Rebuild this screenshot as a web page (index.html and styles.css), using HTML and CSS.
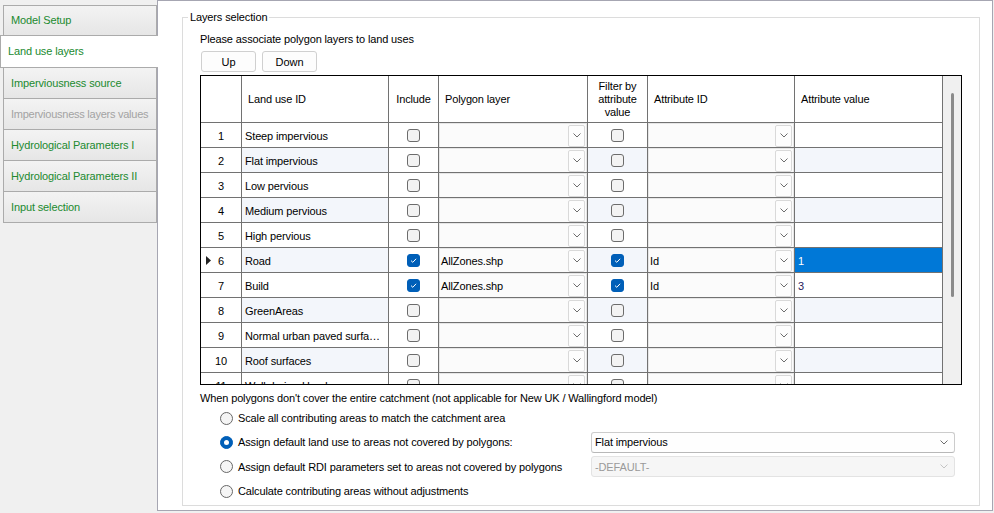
FILE: index.html
```html
<!DOCTYPE html>
<html lang="en">
<head>
    <meta charset="UTF-8">
    <meta name="viewport" content="width=device-width, initial-scale=1.0">
    <title>Land use layers</title>
    <link rel="stylesheet" href="styles.css">
</head>
<body>

    <div class="window">
        <div class="tabs">
            <div class="tab">Model Setup</div>
            <div class="tab active">Land use layers</div>
            <div class="tab">Imperviousness source</div>
            <div class="tab disabled">Imperviousness layers values</div>
            <div class="tab">Hydrological Parameters I</div>
            <div class="tab">Hydrological Parameters II</div>
            <div class="tab">Input selection</div>
        </div>

        <div class="panel">
            <fieldset class="group">
                <legend>Layers selection</legend>
                <p class="hint">Please associate polygon layers to land uses</p>
                <div class="buttons">
                    <button>Up</button>
                    <button>Down</button>
                </div>

                <div class="grid">
                    <div class="grid-body">
                        <div class="row head">
                            <div class="cell c-num"></div>
                            <div class="cell c-name">Land use ID</div>
                            <div class="cell c-inc center">Include</div>
                            <div class="cell c-poly">Polygon layer</div>
                            <div class="cell c-filt center">Filter by<br>attribute<br>value</div>
                            <div class="cell c-attr">Attribute ID</div>
                            <div class="cell c-val">Attribute value</div>
                        </div>

                        <div class="row">
                            <div class="cell c-num">1</div>
                            <div class="cell c-name">Steep impervious</div>
                            <div class="cell c-inc"><span class="chk"></span></div>
                            <div class="cell c-poly"><div class="combo"><span></span><i class="drop"><svg width="8" height="5" viewBox="0 0 8 5"><path d="M0.5 0.5l3.5 3.5 3.5-3.5"/></svg></i></div></div>
                            <div class="cell c-filt"><span class="chk"></span></div>
                            <div class="cell c-attr"><div class="combo"><span></span><i class="drop"><svg width="8" height="5" viewBox="0 0 8 5"><path d="M0.5 0.5l3.5 3.5 3.5-3.5"/></svg></i></div></div>
                            <div class="cell c-val"></div>
                        </div>
                        <div class="row alt">
                            <div class="cell c-num">2</div>
                            <div class="cell c-name">Flat impervious</div>
                            <div class="cell c-inc"><span class="chk"></span></div>
                            <div class="cell c-poly"><div class="combo"><span></span><i class="drop"><svg width="8" height="5" viewBox="0 0 8 5"><path d="M0.5 0.5l3.5 3.5 3.5-3.5"/></svg></i></div></div>
                            <div class="cell c-filt"><span class="chk"></span></div>
                            <div class="cell c-attr"><div class="combo"><span></span><i class="drop"><svg width="8" height="5" viewBox="0 0 8 5"><path d="M0.5 0.5l3.5 3.5 3.5-3.5"/></svg></i></div></div>
                            <div class="cell c-val"></div>
                        </div>
                        <div class="row">
                            <div class="cell c-num">3</div>
                            <div class="cell c-name">Low pervious</div>
                            <div class="cell c-inc"><span class="chk"></span></div>
                            <div class="cell c-poly"><div class="combo"><span></span><i class="drop"><svg width="8" height="5" viewBox="0 0 8 5"><path d="M0.5 0.5l3.5 3.5 3.5-3.5"/></svg></i></div></div>
                            <div class="cell c-filt"><span class="chk"></span></div>
                            <div class="cell c-attr"><div class="combo"><span></span><i class="drop"><svg width="8" height="5" viewBox="0 0 8 5"><path d="M0.5 0.5l3.5 3.5 3.5-3.5"/></svg></i></div></div>
                            <div class="cell c-val"></div>
                        </div>
                        <div class="row alt">
                            <div class="cell c-num">4</div>
                            <div class="cell c-name">Medium pervious</div>
                            <div class="cell c-inc"><span class="chk"></span></div>
                            <div class="cell c-poly"><div class="combo"><span></span><i class="drop"><svg width="8" height="5" viewBox="0 0 8 5"><path d="M0.5 0.5l3.5 3.5 3.5-3.5"/></svg></i></div></div>
                            <div class="cell c-filt"><span class="chk"></span></div>
                            <div class="cell c-attr"><div class="combo"><span></span><i class="drop"><svg width="8" height="5" viewBox="0 0 8 5"><path d="M0.5 0.5l3.5 3.5 3.5-3.5"/></svg></i></div></div>
                            <div class="cell c-val"></div>
                        </div>
                        <div class="row">
                            <div class="cell c-num">5</div>
                            <div class="cell c-name">High pervious</div>
                            <div class="cell c-inc"><span class="chk"></span></div>
                            <div class="cell c-poly"><div class="combo"><span></span><i class="drop"><svg width="8" height="5" viewBox="0 0 8 5"><path d="M0.5 0.5l3.5 3.5 3.5-3.5"/></svg></i></div></div>
                            <div class="cell c-filt"><span class="chk"></span></div>
                            <div class="cell c-attr"><div class="combo"><span></span><i class="drop"><svg width="8" height="5" viewBox="0 0 8 5"><path d="M0.5 0.5l3.5 3.5 3.5-3.5"/></svg></i></div></div>
                            <div class="cell c-val"></div>
                        </div>
                        <div class="row alt">
                            <div class="cell c-num current"><svg class="marker" width="5" height="9" viewBox="0 0 5 9"><path d="M0 0l5 4.5-5 4.5z"/></svg>6</div>
                            <div class="cell c-name">Road</div>
                            <div class="cell c-inc"><span class="chk on"><svg width="11" height="11" viewBox="0 0 11 11"><path d="M3 5.6l1.8 1.7 3.3-3.5"/></svg></span></div>
                            <div class="cell c-poly"><div class="combo"><span>AllZones.shp</span><i class="drop"><svg width="8" height="5" viewBox="0 0 8 5"><path d="M0.5 0.5l3.5 3.5 3.5-3.5"/></svg></i></div></div>
                            <div class="cell c-filt"><span class="chk on"><svg width="11" height="11" viewBox="0 0 11 11"><path d="M3 5.6l1.8 1.7 3.3-3.5"/></svg></span></div>
                            <div class="cell c-attr"><div class="combo"><span>Id</span><i class="drop"><svg width="8" height="5" viewBox="0 0 8 5"><path d="M0.5 0.5l3.5 3.5 3.5-3.5"/></svg></i></div></div>
                            <div class="cell c-val selected">1</div>
                        </div>
                        <div class="row">
                            <div class="cell c-num">7</div>
                            <div class="cell c-name">Build</div>
                            <div class="cell c-inc"><span class="chk on"><svg width="11" height="11" viewBox="0 0 11 11"><path d="M3 5.6l1.8 1.7 3.3-3.5"/></svg></span></div>
                            <div class="cell c-poly"><div class="combo"><span>AllZones.shp</span><i class="drop"><svg width="8" height="5" viewBox="0 0 8 5"><path d="M0.5 0.5l3.5 3.5 3.5-3.5"/></svg></i></div></div>
                            <div class="cell c-filt"><span class="chk on"><svg width="11" height="11" viewBox="0 0 11 11"><path d="M3 5.6l1.8 1.7 3.3-3.5"/></svg></span></div>
                            <div class="cell c-attr"><div class="combo"><span>Id</span><i class="drop"><svg width="8" height="5" viewBox="0 0 8 5"><path d="M0.5 0.5l3.5 3.5 3.5-3.5"/></svg></i></div></div>
                            <div class="cell c-val value">3</div>
                        </div>
                        <div class="row alt">
                            <div class="cell c-num">8</div>
                            <div class="cell c-name">GreenAreas</div>
                            <div class="cell c-inc"><span class="chk"></span></div>
                            <div class="cell c-poly"><div class="combo"><span></span><i class="drop"><svg width="8" height="5" viewBox="0 0 8 5"><path d="M0.5 0.5l3.5 3.5 3.5-3.5"/></svg></i></div></div>
                            <div class="cell c-filt"><span class="chk"></span></div>
                            <div class="cell c-attr"><div class="combo"><span></span><i class="drop"><svg width="8" height="5" viewBox="0 0 8 5"><path d="M0.5 0.5l3.5 3.5 3.5-3.5"/></svg></i></div></div>
                            <div class="cell c-val"></div>
                        </div>
                        <div class="row">
                            <div class="cell c-num">9</div>
                            <div class="cell c-name">Normal urban paved surfa…</div>
                            <div class="cell c-inc"><span class="chk"></span></div>
                            <div class="cell c-poly"><div class="combo"><span></span><i class="drop"><svg width="8" height="5" viewBox="0 0 8 5"><path d="M0.5 0.5l3.5 3.5 3.5-3.5"/></svg></i></div></div>
                            <div class="cell c-filt"><span class="chk"></span></div>
                            <div class="cell c-attr"><div class="combo"><span></span><i class="drop"><svg width="8" height="5" viewBox="0 0 8 5"><path d="M0.5 0.5l3.5 3.5 3.5-3.5"/></svg></i></div></div>
                            <div class="cell c-val"></div>
                        </div>
                        <div class="row alt">
                            <div class="cell c-num">10</div>
                            <div class="cell c-name">Roof surfaces</div>
                            <div class="cell c-inc"><span class="chk"></span></div>
                            <div class="cell c-poly"><div class="combo"><span></span><i class="drop"><svg width="8" height="5" viewBox="0 0 8 5"><path d="M0.5 0.5l3.5 3.5 3.5-3.5"/></svg></i></div></div>
                            <div class="cell c-filt"><span class="chk"></span></div>
                            <div class="cell c-attr"><div class="combo"><span></span><i class="drop"><svg width="8" height="5" viewBox="0 0 8 5"><path d="M0.5 0.5l3.5 3.5 3.5-3.5"/></svg></i></div></div>
                            <div class="cell c-val"></div>
                        </div>
                        <div class="row">
                            <div class="cell c-num">11</div>
                            <div class="cell c-name">Well drained land</div>
                            <div class="cell c-inc"><span class="chk"></span></div>
                            <div class="cell c-poly"><div class="combo"><span></span><i class="drop"><svg width="8" height="5" viewBox="0 0 8 5"><path d="M0.5 0.5l3.5 3.5 3.5-3.5"/></svg></i></div></div>
                            <div class="cell c-filt"><span class="chk"></span></div>
                            <div class="cell c-attr"><div class="combo"><span></span><i class="drop"><svg width="8" height="5" viewBox="0 0 8 5"><path d="M0.5 0.5l3.5 3.5 3.5-3.5"/></svg></i></div></div>
                            <div class="cell c-val"></div>
                        </div>
                    </div>
                    <div class="scrollbar"><div class="thumb"></div></div>
                </div>

                <p class="hint note">When polygons don't cover the entire catchment (not applicable for New UK / Wallingford model)</p>

                <div class="options">
                    <div class="option">
                        <label><span class="radio"></span>Scale all contributing areas to match the catchment area</label>
                    </div>
                    <div class="option">
                        <label><span class="radio on"></span>Assign default land use to areas not covered by polygons:</label>
                        <div class="select"><span>Flat impervious</span><svg width="8" height="5" viewBox="0 0 8 5"><path d="M0.5 0.5l3.5 3.5 3.5-3.5"/></svg></div>
                    </div>
                    <div class="option tall">
                        <label><span class="radio"></span>Assign default RDI parameters set to areas not covered by polygons</label>
                        <div class="select off"><span>-DEFAULT-</span><svg width="8" height="5" viewBox="0 0 8 5"><path d="M0.5 0.5l3.5 3.5 3.5-3.5"/></svg></div>
                    </div>
                    <div class="option">
                        <label><span class="radio"></span>Calculate contributing areas without adjustments</label>
                    </div>
                </div>
            </fieldset>
        </div>
    </div>

</body>
</html>
```

FILE: styles.css
```css
body {
    font-family: 'Liberation Sans', Arial, sans-serif;
    font-size: 11px;
    letter-spacing: -0.13px;
    margin: 0;
    padding: 0;
    background-color: #f0f0f0;
    color: #000;
}

.window {
    display: flex;
    width: 994px;
    height: 513px;
}

/* left tab strip */
.tabs {
    width: 157px;
    padding-top: 5px;
    box-sizing: border-box;
}

.tab {
    height: 32px;
    margin: -1px 0 0 3px;
    width: 154px;
    box-sizing: border-box;
    border: 1px solid #ababab;
    background: linear-gradient(#f3f3f3, #e6e6e6);
    color: #218a2f;
    padding-left: 7px;
    line-height: 30px;
    white-space: nowrap;
}

.tab:first-child {
    height: 31px;
    margin-top: 0;
    line-height: 29px;
}

.tab.active {
    position: relative;
    z-index: 2;
    height: 33px;
    width: 158px;
    margin-left: 0;
    border-right: none;
    background: #fff;
    line-height: 31px;
}

.tab.disabled {
    color: #a3a3a3;
    letter-spacing: -0.25px;
}

/* main page */
.panel {
    width: 836px;
    height: 511px;
    box-sizing: border-box;
    border: 1px solid #a6a6b2;
    background-color: #fff;
    padding: 10px 12px 0 24px;
}

.group {
    margin: 0;
    width: 798px;
    box-sizing: border-box;
    padding: 0 17px 2px 17px;
    border: 1px solid #dcdcdc;
    min-width: 0;
}

.group legend {
    padding: 0 2px;
    margin-left: -12px;
    line-height: 13px;
}

.hint {
    margin: 8px 0 0;
    line-height: 14px;
}

.hint.note {
    margin-top: 6px;
}

.buttons {
    display: flex;
    gap: 6px;
    margin: 5px 0 0 1px;
}

button {
    font: inherit;
    width: 55px;
    height: 21px;
    padding: 0;
    background-color: #fdfdfd;
    border: 1px solid #d0d0d0;
    border-radius: 3px;
    color: #000;
}

/* data grid */
.grid {
    display: flex;
    margin-top: 3px;
    width: 762px;
    height: 310px;
    box-sizing: border-box;
    border: 1px solid #000;
}

.grid-body {
    width: 742px;
    overflow: hidden;
}

.row {
    display: flex;
    height: 25px;
}

.row.head {
    height: 47px;
}

.cell {
    box-sizing: border-box;
    border-right: 1px solid #727272;
    border-bottom: 1px solid #727272;
    display: flex;
    align-items: center;
    padding-top: 1px;
    white-space: nowrap;
    overflow: hidden;
    background-color: #fff;
}

.head .cell {
    padding-left: 6px;
    line-height: 13px;
}

.head .cell.center {
    justify-content: center;
    text-align: center;
    padding-left: 0;
}

.c-num { width: 41px; justify-content: center; position: relative; }
.c-name { width: 147px; padding-left: 3px; }
.c-inc { width: 50px; justify-content: center; padding-top: 0; }
.c-poly { width: 149px; padding-top: 0; }
.c-filt { width: 60px; justify-content: center; padding-top: 0; }
.c-attr { width: 147px; padding-top: 0; }
.c-val { width: 148px; padding-left: 3px; }

.row.alt .c-name,
.row.alt .c-filt,
.row.alt .c-val {
    background-color: #f3f6fb;
}

.c-val.selected {
    background-color: #0078d7 !important;
    color: #fff;
}

.c-val.value {
    color: #27205c;
}

.marker {
    position: absolute;
    left: 5px;
    top: 8px;
}

.chk {
    width: 13px;
    height: 13px;
    box-sizing: border-box;
    border: 1px solid #6c6c6c;
    border-radius: 3px;
    background-color: #f3f3f3;
    display: flex;
    align-items: center;
    justify-content: center;
}

.chk.on {
    background-color: #005fb8;
    border-color: #005fb8;
}

.chk svg path {
    fill: none;
    stroke: #fff;
    stroke-width: 1;
}

.combo {
    width: 100%;
    height: 100%;
    box-sizing: border-box;
    border: 1px solid #e6e6e6;
    border-bottom: none;
    background-color: #fbfbfb;
    display: flex;
    align-items: center;
    justify-content: space-between;
}

.combo span {
    padding: 1px 0 0 1px;
}

.drop {
    width: 17px;
    height: 22px;
    box-sizing: border-box;
    margin-right: 1px;
    border: 1px solid #d9d9d9;
    border-radius: 2px;
    background-color: #fdfdfd;
    display: flex;
    align-items: center;
    justify-content: center;
}

svg path {
    fill: none;
    stroke: #6d6d6d;
    stroke-width: 1;
}

.marker path {
    fill: #222;
    stroke: none;
}

.scrollbar {
    width: 18px;
    background-color: #f0f0f0;
    padding-top: 17px;
    box-sizing: border-box;
}

.thumb {
    width: 3px;
    height: 204px;
    margin-left: 8px;
    border-radius: 2px;
    background-color: #8b8b8b;
}

/* radio options */
.options {
    display: flex;
    flex-direction: column;
    margin-top: 1px;
}

.option {
    display: grid;
    grid-template-columns: 391px 364px;
    align-items: center;
    height: 24px;
}

.option.tall {
    height: 25px;
}

.option label {
    display: flex;
    align-items: center;
    gap: 5px;
    padding-left: 20px;
    white-space: nowrap;
}

.radio {
    width: 13px;
    height: 13px;
    box-sizing: border-box;
    border: 1px solid #686868;
    border-radius: 50%;
    background-color: #f5f5f5;
    display: flex;
    align-items: center;
    justify-content: center;
}

.radio.on {
    background-color: #005fb8;
    border-color: #005fb8;
}

.radio.on::after {
    content: "";
    width: 5px;
    height: 5px;
    border-radius: 50%;
    background-color: #fff;
}

.select {
    height: 21px;
    box-sizing: border-box;
    border: 1px solid #cccccc;
    border-bottom-color: #b8b8b8;
    border-radius: 3px;
    background-color: #fefefe;
    display: flex;
    align-items: center;
    justify-content: space-between;
    padding: 0 6px 0 3px;
}

.select.off {
    background-color: #f6f6f6;
    border-color: #e3e3e3;
    color: #9a9a9a;
}

.select.off svg path {
    stroke: #c4c4c4;
}
```
